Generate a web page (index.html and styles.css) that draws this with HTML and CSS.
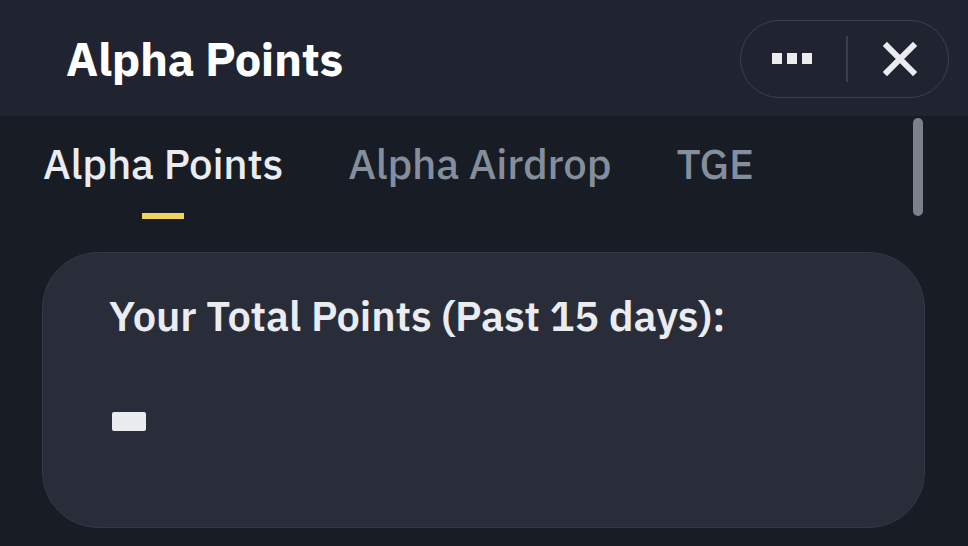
FILE: index.html
```html
<!DOCTYPE html>
<html>
<head>
<meta charset="utf-8">
<title>Alpha Points</title>
<link rel="stylesheet" href="styles.css">
</head>
<body>
<div class="header">
  <h1 class="title">Alpha Points</h1>
  <div class="pill">
    <svg class="more" width="40" height="12" viewBox="0 0 40 12">
      <rect x="0" y="0" width="10" height="11" fill="#eaecef"/>
      <rect x="15" y="0" width="10" height="11" fill="#eaecef"/>
      <rect x="30" y="0" width="10" height="11" fill="#eaecef"/>
    </svg>
    <span class="divider"></span>
    <svg class="close" width="34" height="34" viewBox="0 0 34 34">
      <path d="M4 4 L30 30 M30 4 L4 30" stroke="#eaecef" stroke-width="6" stroke-linecap="square"/>
    </svg>
  </div>
</div>

<div class="main">
  <div class="scrollbar"></div>
  <div class="tabs">
    <div class="tab active">Alpha Points<span class="underline"></span></div>
    <div class="tab">Alpha Airdrop</div>
    <div class="tab">TGE</div>
  </div>

  <div class="card">
    <div class="card-title">Your Total Points (Past 15 days):</div>
    <div class="placeholder"></div>
  </div>
</div>
</body>
</html>
```

FILE: styles.css
```css
body {
   margin: 0;
   background-color: #181c25;
   font-family: "IBM Plex Sans", Roboto, "Noto Sans", sans-serif;
   color: #eaecef;
   width: 968px;
   height: 546px;
   overflow: hidden;
}

.header {
   height: 116px;
   background-color: #1f2430;
   display: flex;
   align-items: center;
   justify-content: space-between;
   padding: 0 19px 0 66px;
}

.title {
   margin: 0;
   font-size: 47px;
   font-weight: 700;
   color: #ffffff;
   letter-spacing: -0.3px;
}

.pill {
   width: 209px;
   height: 78px;
   box-sizing: border-box;
   border: 1.5px solid #3b404c;
   border-radius: 40px;
   display: flex;
   align-items: center;
   padding-left: 31px;
   margin-top: 2px;
}

.divider {
   width: 2px;
   height: 46px;
   background-color: #3b404c;
   margin: 0 35px 0 34px;
}

.main {
   position: relative;
   padding-top: 1px;
}

.scrollbar {
   position: absolute;
   right: 45px;
   top: 2px;
   width: 10px;
   height: 98px;
   border-radius: 5px;
   background-color: #7b808d;
}

.tabs {
   display: flex;
   gap: 65px;
   padding-left: 43px;
   height: 135px;
}

.tab {
   position: relative;
   font-size: 42px;
   font-weight: 500;
   color: #848e9c;
   padding-top: 19px;
   letter-spacing: -0.2px;
}

.tab.active {
   color: #eaecef;
}

.underline {
   position: absolute;
   left: 50%;
   top: 96px;
   width: 42px;
   height: 6px;
   margin-left: -21px;
   background-color: #f0d35a;
}

.card {
   margin: 0 43px 0 42px;
   height: 276px;
   box-sizing: border-box;
   background-color: #282d39;
   border: 1.5px solid #333845;
   border-radius: 56px;
   padding: 35px 0 0 66px;
}

.card-title {
   font-size: 41.5px;
   font-weight: 600;
   color: #eaecef;
   letter-spacing: -0.1px;
}

.placeholder {
   width: 34px;
   height: 19px;
   margin: 70px 0 0 3px;
   background-color: #eaecef;
   border-radius: 2px;
}
```
